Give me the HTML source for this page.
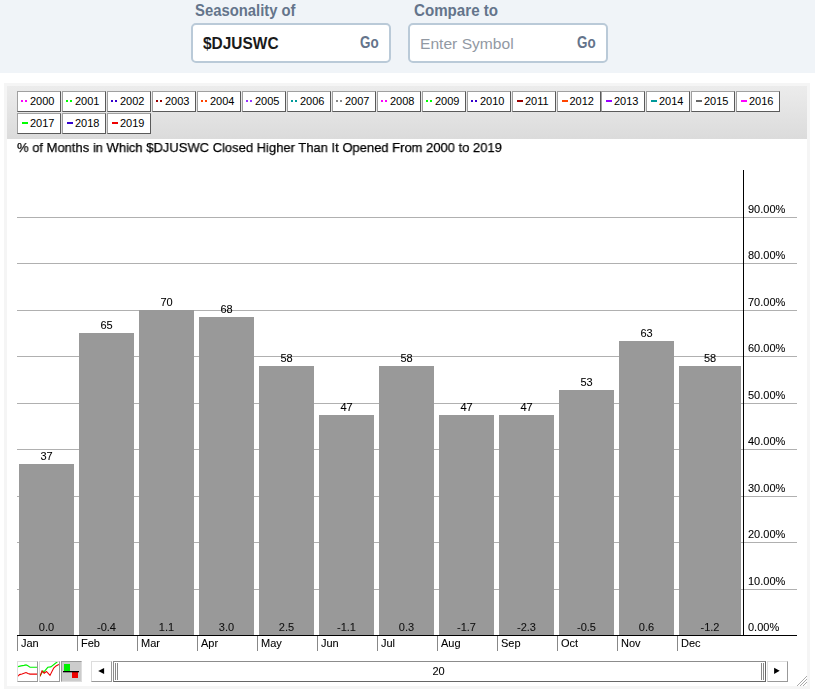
<!DOCTYPE html>
<html><head><meta charset="utf-8"><title>Seasonality</title>
<style>
html,body{margin:0;padding:0;background:#fff;}
body{width:815px;height:693px;position:relative;overflow:hidden;font-family:"Liberation Sans",sans-serif;}
.abs{position:absolute;}
.hdr{left:0;top:0;width:815px;height:73px;background:#f0f4f8;}
.lbl{font-weight:bold;font-size:16px;color:#64748b;line-height:20px;white-space:nowrap;transform-origin:0 0;}
.box{box-sizing:border-box;height:40px;width:200px;top:23px;border:2px solid #bacad8;border-radius:5px;background:#fff;}
.sym{font-weight:bold;font-size:16.5px;color:#1a1a1a;line-height:20px;white-space:nowrap;transform-origin:0 0;}
.ph{font-size:14.5px;color:#9299a3;line-height:20px;white-space:nowrap;transform-origin:0 0;}
.go{font-weight:bold;font-size:15.5px;color:#64748b;line-height:20px;white-space:nowrap;transform-origin:0 0;}
.panel{left:4px;top:83px;width:806px;height:606px;background:#f5f5f5;}
.inner{left:7px;top:86px;width:800px;height:600px;background:#fff;}
.legend{left:7px;top:86px;width:800px;height:53px;background:linear-gradient(#ececec,#dbdbdb);}
.lb{box-sizing:border-box;width:44px;height:21px;background:#fff;border:1px solid;border-color:#a0a0a0 #5a5a5a #5a5a5a #a0a0a0;font-size:11px;line-height:19px;color:#000;white-space:nowrap;}
.lb i{position:absolute;top:8px;height:2px;display:block;}
.lb span{position:absolute;left:12px;top:0;}
.t11{font-size:11px;line-height:13px;color:#000;white-space:nowrap;will-change:transform;-webkit-text-stroke:0.08px #000;}
.title{font-size:13.4px;line-height:15px;color:#000;white-space:nowrap;left:17.3px;top:139.9px;transform-origin:0 0;transform:scaleX(0.97);will-change:transform;-webkit-text-stroke:0.25px #000;}
.bar{background:#999;}
.grid{height:1px;background:#b0b0b0;left:17px;width:780px;}
.ctr{text-align:center;}
.ib{box-sizing:border-box;top:661px;width:21px;height:21px;background:#fff;border:1px solid #999;border-top-color:#ddd;border-left-color:#ddd;}
</style></head><body>
<div class="abs hdr"></div>
<div class="abs lbl" style="left:195px;top:1px;transform:scaleX(0.927);">Seasonality of</div>
<div class="abs box" style="left:191px;"></div>
<div class="abs sym" style="left:203px;top:33.35px;transform:scaleX(0.937);">$DJUSWC</div>
<div class="abs go" style="left:360.3px;top:32.9px;transform-origin:0 15.1px;transform:scale(0.866,1.1);">Go</div>
<div class="abs lbl" style="left:414px;top:1px;transform:scaleX(0.945);">Compare to</div>
<div class="abs box" style="left:408px;"></div>
<div class="abs ph" style="left:420.1px;top:33.5px;transform:scaleX(1.076);">Enter Symbol</div>
<div class="abs go" style="left:577.4px;top:32.9px;transform-origin:0 15.1px;transform:scale(0.866,1.1);">Go</div>
<div class="abs panel"></div>
<div class="abs inner"></div>
<div class="abs legend"></div>

<div class="abs lb" style="left:17px;top:91px;"><i style="left:3px;width:2px;background:#ff00ff"></i><i style="left:7px;width:2px;background:#ff00ff"></i><span>2000</span></div>
<div class="abs lb" style="left:62px;top:91px;"><i style="left:3px;width:2px;background:#00ff00"></i><i style="left:7px;width:2px;background:#00ff00"></i><span>2001</span></div>
<div class="abs lb" style="left:107px;top:91px;"><i style="left:3px;width:2px;background:#3300cc"></i><i style="left:7px;width:2px;background:#3300cc"></i><span>2002</span></div>
<div class="abs lb" style="left:152px;top:91px;"><i style="left:3px;width:2px;background:#990000"></i><i style="left:7px;width:2px;background:#990000"></i><span>2003</span></div>
<div class="abs lb" style="left:197px;top:91px;"><i style="left:3px;width:2px;background:#ff4400"></i><i style="left:7px;width:2px;background:#ff4400"></i><span>2004</span></div>
<div class="abs lb" style="left:242px;top:91px;"><i style="left:3px;width:2px;background:#9933ff"></i><i style="left:7px;width:2px;background:#9933ff"></i><span>2005</span></div>
<div class="abs lb" style="left:287px;top:91px;"><i style="left:3px;width:2px;background:#009999"></i><i style="left:7px;width:2px;background:#009999"></i><span>2006</span></div>
<div class="abs lb" style="left:332px;top:91px;"><i style="left:3px;width:2px;background:#888888"></i><i style="left:7px;width:2px;background:#888888"></i><span>2007</span></div>
<div class="abs lb" style="left:377px;top:91px;"><i style="left:3px;width:2px;background:#ff00ff"></i><i style="left:7px;width:2px;background:#ff00ff"></i><span>2008</span></div>
<div class="abs lb" style="left:422px;top:91px;"><i style="left:3px;width:2px;background:#00ff00"></i><i style="left:7px;width:2px;background:#00ff00"></i><span>2009</span></div>
<div class="abs lb" style="left:467px;top:91px;"><i style="left:3px;width:2px;background:#3300cc"></i><i style="left:7px;width:2px;background:#3300cc"></i><span>2010</span></div>
<div class="abs lb" style="left:512px;top:91px;"><i style="left:4px;width:6px;background:#990000"></i><span>2011</span></div>
<div class="abs lb" style="left:556.5px;top:91px;"><i style="left:4px;width:6px;background:#ff4400"></i><span>2012</span></div>
<div class="abs lb" style="left:601px;top:91px;"><i style="left:4px;width:6px;background:#9900ff"></i><span>2013</span></div>
<div class="abs lb" style="left:646px;top:91px;"><i style="left:4px;width:6px;background:#009999"></i><span>2014</span></div>
<div class="abs lb" style="left:691px;top:91px;"><i style="left:4px;width:6px;background:#666666"></i><span>2015</span></div>
<div class="abs lb" style="left:736px;top:91px;"><i style="left:4px;width:6px;background:#ff00ff"></i><span>2016</span></div>
<div class="abs lb" style="left:17px;top:113px;"><i style="left:4px;width:6px;background:#00ff00"></i><span>2017</span></div>
<div class="abs lb" style="left:62px;top:113px;"><i style="left:4px;width:6px;background:#3300cc"></i><span>2018</span></div>
<div class="abs lb" style="left:107px;top:113px;"><i style="left:4px;width:6px;background:#ee0000"></i><span>2019</span></div>
<div class="abs title">% of Months in Which $DJUSWC Closed Higher Than It Opened From 2000 to 2019</div>
<div class="abs grid" style="top:589px;"></div>
<div class="abs t11" style="left:748px;top:575.3px;">10.00%</div>
<div class="abs grid" style="top:542px;"></div>
<div class="abs t11" style="left:748px;top:528.3px;">20.00%</div>
<div class="abs grid" style="top:496px;"></div>
<div class="abs t11" style="left:748px;top:482.3px;">30.00%</div>
<div class="abs grid" style="top:449px;"></div>
<div class="abs t11" style="left:748px;top:435.3px;">40.00%</div>
<div class="abs grid" style="top:403px;"></div>
<div class="abs t11" style="left:748px;top:389.3px;">50.00%</div>
<div class="abs grid" style="top:356px;"></div>
<div class="abs t11" style="left:748px;top:342.3px;">60.00%</div>
<div class="abs grid" style="top:310px;"></div>
<div class="abs t11" style="left:748px;top:296.3px;">70.00%</div>
<div class="abs grid" style="top:263px;"></div>
<div class="abs t11" style="left:748px;top:249.3px;">80.00%</div>
<div class="abs grid" style="top:217px;"></div>
<div class="abs t11" style="left:748px;top:203.3px;">90.00%</div>
<div class="abs t11" style="left:748px;top:621.2px;">0.00%</div>
<div class="abs bar" style="left:19px;top:464.0px;width:55px;height:171.0px;"></div>
<div class="abs t11 ctr" style="left:19px;width:55px;top:449.8px;">37</div>
<div class="abs t11 ctr" style="left:19px;width:55px;top:620.5px;color:#111;">0.0</div>
<div class="abs" style="left:17px;top:636.0px;width:1px;height:15px;background:#888;"></div>
<div class="abs t11" style="left:21px;top:636.7px;">Jan</div>
<div class="abs bar" style="left:79px;top:333.0px;width:55px;height:302.0px;"></div>
<div class="abs t11 ctr" style="left:79px;width:55px;top:318.8px;">65</div>
<div class="abs t11 ctr" style="left:79px;width:55px;top:620.5px;color:#111;">-0.4</div>
<div class="abs" style="left:77px;top:636.0px;width:1px;height:15px;background:#888;"></div>
<div class="abs t11" style="left:81px;top:636.7px;">Feb</div>
<div class="abs bar" style="left:139px;top:310.0px;width:55px;height:325.0px;"></div>
<div class="abs t11 ctr" style="left:139px;width:55px;top:295.8px;">70</div>
<div class="abs t11 ctr" style="left:139px;width:55px;top:620.5px;color:#111;">1.1</div>
<div class="abs" style="left:137px;top:636.0px;width:1px;height:15px;background:#888;"></div>
<div class="abs t11" style="left:141px;top:636.7px;">Mar</div>
<div class="abs bar" style="left:199px;top:317.0px;width:55px;height:318.0px;"></div>
<div class="abs t11 ctr" style="left:199px;width:55px;top:302.8px;">68</div>
<div class="abs t11 ctr" style="left:199px;width:55px;top:620.5px;color:#111;">3.0</div>
<div class="abs" style="left:197px;top:636.0px;width:1px;height:15px;background:#888;"></div>
<div class="abs t11" style="left:201px;top:636.7px;">Apr</div>
<div class="abs bar" style="left:259px;top:366.0px;width:55px;height:269.0px;"></div>
<div class="abs t11 ctr" style="left:259px;width:55px;top:351.8px;">58</div>
<div class="abs t11 ctr" style="left:259px;width:55px;top:620.5px;color:#111;">2.5</div>
<div class="abs" style="left:257px;top:636.0px;width:1px;height:15px;background:#888;"></div>
<div class="abs t11" style="left:261px;top:636.7px;">May</div>
<div class="abs bar" style="left:319px;top:415.0px;width:55px;height:220.0px;"></div>
<div class="abs t11 ctr" style="left:319px;width:55px;top:400.8px;">47</div>
<div class="abs t11 ctr" style="left:319px;width:55px;top:620.5px;color:#111;">-1.1</div>
<div class="abs" style="left:317px;top:636.0px;width:1px;height:15px;background:#888;"></div>
<div class="abs t11" style="left:321px;top:636.7px;">Jun</div>
<div class="abs bar" style="left:379px;top:366.0px;width:55px;height:269.0px;"></div>
<div class="abs t11 ctr" style="left:379px;width:55px;top:351.8px;">58</div>
<div class="abs t11 ctr" style="left:379px;width:55px;top:620.5px;color:#111;">0.3</div>
<div class="abs" style="left:377px;top:636.0px;width:1px;height:15px;background:#888;"></div>
<div class="abs t11" style="left:381px;top:636.7px;">Jul</div>
<div class="abs bar" style="left:439px;top:415.0px;width:55px;height:220.0px;"></div>
<div class="abs t11 ctr" style="left:439px;width:55px;top:400.8px;">47</div>
<div class="abs t11 ctr" style="left:439px;width:55px;top:620.5px;color:#111;">-1.7</div>
<div class="abs" style="left:437px;top:636.0px;width:1px;height:15px;background:#888;"></div>
<div class="abs t11" style="left:441px;top:636.7px;">Aug</div>
<div class="abs bar" style="left:499px;top:415.0px;width:55px;height:220.0px;"></div>
<div class="abs t11 ctr" style="left:499px;width:55px;top:400.8px;">47</div>
<div class="abs t11 ctr" style="left:499px;width:55px;top:620.5px;color:#111;">-2.3</div>
<div class="abs" style="left:497px;top:636.0px;width:1px;height:15px;background:#888;"></div>
<div class="abs t11" style="left:501px;top:636.7px;">Sep</div>
<div class="abs bar" style="left:559px;top:390.0px;width:55px;height:245.0px;"></div>
<div class="abs t11 ctr" style="left:559px;width:55px;top:375.8px;">53</div>
<div class="abs t11 ctr" style="left:559px;width:55px;top:620.5px;color:#111;">-0.5</div>
<div class="abs" style="left:557px;top:636.0px;width:1px;height:15px;background:#888;"></div>
<div class="abs t11" style="left:561px;top:636.7px;">Oct</div>
<div class="abs bar" style="left:619px;top:341.0px;width:55px;height:294.0px;"></div>
<div class="abs t11 ctr" style="left:619px;width:55px;top:326.8px;">63</div>
<div class="abs t11 ctr" style="left:619px;width:55px;top:620.5px;color:#111;">0.6</div>
<div class="abs" style="left:617px;top:636.0px;width:1px;height:15px;background:#888;"></div>
<div class="abs t11" style="left:621px;top:636.7px;">Nov</div>
<div class="abs bar" style="left:679px;top:366.0px;width:62px;height:269.0px;"></div>
<div class="abs t11 ctr" style="left:679px;width:62px;top:351.8px;">58</div>
<div class="abs t11 ctr" style="left:679px;width:62px;top:620.5px;color:#111;">-1.2</div>
<div class="abs" style="left:677px;top:636.0px;width:1px;height:15px;background:#888;"></div>
<div class="abs t11" style="left:681px;top:636.7px;">Dec</div>
<div class="abs" style="left:17px;top:635.0px;width:780px;height:1px;background:#000;"></div>
<div class="abs" style="left:743px;top:170px;width:1px;height:466.0px;background:#000;"></div>

<div class="abs ib" style="left:17px;"><svg width="19" height="19" viewBox="0 0 19 19" style="position:absolute;left:0;top:0"><polyline points="0,4.6 3,3.9 6,3.4 8,2.9 9.5,3.6 12,5.2 19,5.2" fill="none" stroke="#00f200" stroke-width="1.1"/><polyline points="0,14.2 1.5,12.6 4,12 8,10.6 10,11.4 12,12.1 19,12.1" fill="none" stroke="#ee0000" stroke-width="1.1"/></svg></div>
<div class="abs ib" style="left:39px;"><svg width="19" height="19" viewBox="0 0 19 19" style="position:absolute;left:0;top:0"><polyline points="0,14.2 2.7,9 4.2,9.5 7.8,5.3 10.8,4.9 17.4,-0.3" fill="none" stroke="#00f200" stroke-width="1.1"/><polyline points="0,14.2 2,9 4.2,11.2 6.4,9.5 10,13.4 13.7,6 16,3.9 18.9,2.4" fill="none" stroke="#ee0000" stroke-width="1.1"/></svg></div>
<div class="abs ib" style="left:61px;background:#ccc;border-color:#999 #ddd #ddd #999;"><svg width="19" height="19" viewBox="0 0 19 19" style="position:absolute;left:0;top:0"><rect x="2" y="2" width="6" height="7" fill="#00f200"/><rect x="10" y="10" width="6" height="6" fill="#ee0000"/><rect x="1" y="9" width="16" height="1.3" fill="#000"/></svg></div>
<div class="abs ib" style="left:91px;"><svg width="19" height="19" viewBox="0 0 19 19" style="position:absolute;left:0;top:0"><polygon points="6.2,9.05 12.1,6 12.1,12.1" fill="#000"/></svg></div>
<div class="abs" style="box-sizing:border-box;left:113px;top:661px;width:653px;height:21px;background:#fff;border:1px solid;border-color:#8c8c8c #666 #666 #8c8c8c;"></div>
<div class="abs" style="left:115px;top:663px;width:1px;height:17px;background:#888;"></div>
<div class="abs" style="left:117px;top:663px;width:1px;height:17px;background:#888;"></div>
<div class="abs" style="left:761px;top:663px;width:1px;height:17px;background:#888;"></div>
<div class="abs" style="left:763px;top:663px;width:1px;height:17px;background:#888;"></div>
<div class="abs t11 ctr" style="left:112px;width:653px;top:665px;">20</div>
<div class="abs ib" style="left:767px;"><svg width="19" height="19" viewBox="0 0 19 19" style="position:absolute;left:0;top:0"><polygon points="11.7,8.8 6.1,5.7 6.1,11.9" fill="#000"/></svg></div>
<svg class="abs" style="left:796px;top:675px" width="12" height="12" viewBox="0 0 12 12"><path d="M1,11 L11,1 M4,11 L11,4 M7,11 L11,7" stroke="#aaa" stroke-width="1" fill="none"/></svg>

</body></html>
